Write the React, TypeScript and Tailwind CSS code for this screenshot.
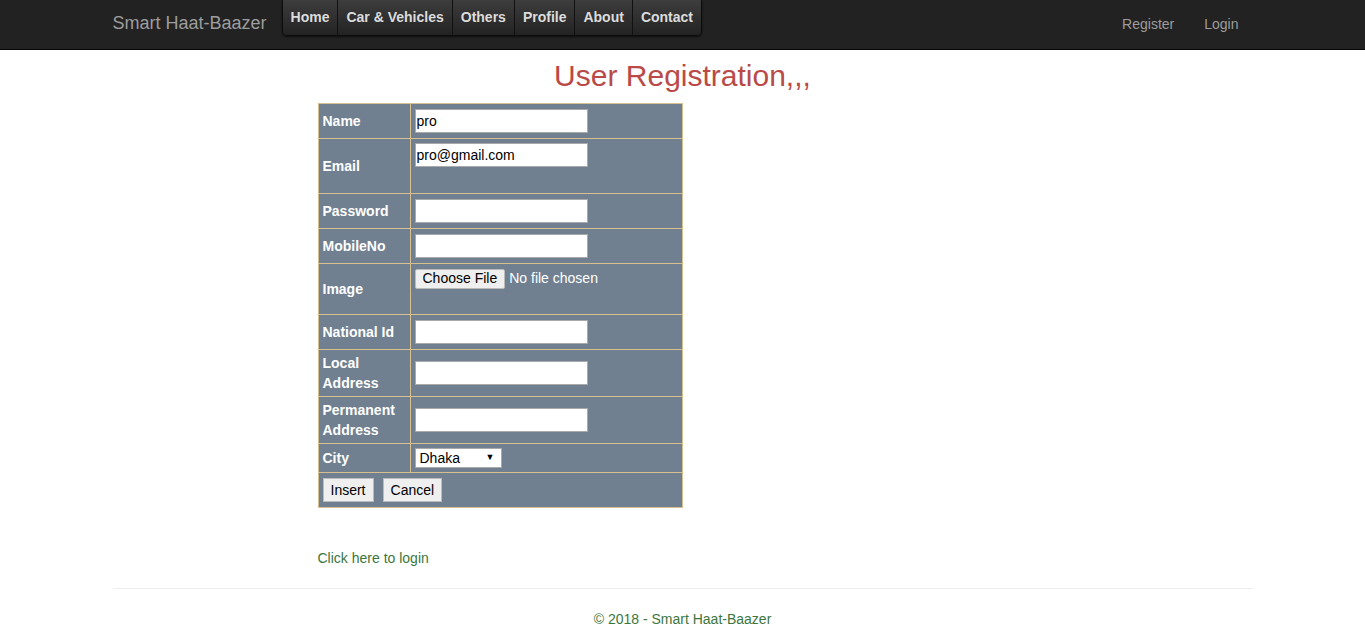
import React from "react";

const menu = ["Home", "Car & Vehicles", "Others", "Profile", "About", "Contact"];

function TextBox({ value = "" }: { value?: string }) {
  return (
    <input
      defaultValue={value}
      className="box-border h-[24px] w-[173px] border border-[#a9a9a9] bg-white px-[1px] text-[14px] text-black outline-none"
    />
  );
}

function Label({ children }: { children: React.ReactNode }) {
  return (
    <td className="w-[92px] border border-[#d8bf8f] px-[4px] align-middle text-[14px] font-bold leading-[20px] text-white">
      {children}
    </td>
  );
}

export default function App() {
  return (
    <div className="min-h-screen bg-white font-['Liberation_Sans',Arial,sans-serif] text-[14px] text-[#333]">
      {/* Navbar */}
      <header className="h-[50px] border-b border-[#080808] bg-[#222]">
        <div className="mx-auto flex h-full w-[1170px] items-start px-[15px]">
          <a className="mt-[13px] text-[18px] leading-[20px] text-[#9d9d9d]">Smart Haat-Baazer</a>
          <nav className="ml-[15px] flex h-[36px] overflow-hidden rounded-b-[5px] border border-t-0 border-[#0c0c0c] shadow-[0_1px_2px_rgba(0,0,0,0.6)]">
            {menu.map((m, i) => (
              <span
                key={m}
                className={
                  "flex h-full items-center bg-gradient-to-b from-[#3d3d3d] to-[#232323] px-[8px] text-[14px] font-bold text-[#dcdcdc] " +
                  (i < menu.length - 1 ? "border-r border-[#111]" : "")
                }
              >
                {m}
              </span>
            ))}
          </nav>
          <div className="ml-auto flex h-full items-center text-[14px] text-[#9d9d9d]">
            <a className="px-[15px]">Register</a>
            <a className="pl-[15px] pr-[14px]">Login</a>
          </div>
        </div>
      </header>

      <main className="mx-auto w-[1170px] px-[15px]">
        <h2 className="mt-[9px] mb-[11px] text-center text-[30px] leading-[33px] text-[#b94a48]">
          User Registration,,,
        </h2>

        <div className="pl-[205px]">
          <table className="w-[365px] border-collapse border border-[#d8bf8f] bg-[#708090]">
            <tbody>
              <tr className="h-[35px]">
                <Label>Name</Label>
                <td className="border border-[#d8bf8f] px-[4px] align-middle"><TextBox value="pro" /></td>
              </tr>
              <tr className="h-[55px]">
                <Label>Email</Label>
                <td className="border border-[#d8bf8f] px-[4px] pt-[4px] align-top"><TextBox value="pro@gmail.com" /></td>
              </tr>
              <tr className="h-[35px]">
                <Label>Password</Label>
                <td className="border border-[#d8bf8f] px-[4px] align-middle"><TextBox /></td>
              </tr>
              <tr className="h-[35px]">
                <Label>MobileNo</Label>
                <td className="border border-[#d8bf8f] px-[4px] align-middle"><TextBox /></td>
              </tr>
              <tr className="h-[51px]">
                <Label>Image</Label>
                <td className="border border-[#d8bf8f] px-[4px] pt-[4px] align-top">
                  <div className="flex items-center gap-[4px] text-[14px] text-white">
                    <span className="flex h-[20px] items-center rounded-[2px] border border-[#bbb] bg-[#efefef] px-[7px] text-black">Choose File</span>
                    <span>No file chosen</span>
                  </div>
                </td>
              </tr>
              <tr className="h-[35px]">
                <Label>National Id</Label>
                <td className="border border-[#d8bf8f] px-[4px] align-middle"><TextBox /></td>
              </tr>
              <tr className="h-[47px]">
                <Label>Local Address</Label>
                <td className="border border-[#d8bf8f] px-[4px] align-middle"><TextBox /></td>
              </tr>
              <tr className="h-[47px]">
                <Label>Permanent Address</Label>
                <td className="border border-[#d8bf8f] px-[4px] align-middle"><TextBox /></td>
              </tr>
              <tr className="h-[29px]">
                <Label>City</Label>
                <td className="border border-[#d8bf8f] px-[4px] align-middle">
                  <div className="flex h-[20px] w-[87px] items-center justify-between border border-[#a9a9a9] bg-white pl-[4px] pr-[6px] text-[14px] text-black">
                    <span>Dhaka</span>
                    <span className="text-[9px]">▼</span>
                  </div>
                </td>
              </tr>
              <tr className="h-[35px]">
                <td colSpan={2} className="border border-[#d8bf8f] px-[4px] align-middle">
                  <div className="flex gap-[9px]">
                    <span className="flex h-[24px] items-center border border-[#bbb] bg-[#efefef] px-[7px] text-[14px] text-black">Insert</span>
                    <span className="flex h-[24px] items-center border border-[#bbb] bg-[#efefef] px-[7px] text-[14px] text-black">Cancel</span>
                  </div>
                </td>
              </tr>
            </tbody>
          </table>

          <p className="mt-[40px] leading-[20px] text-[#3c763d]">Click here to login</p>
        </div>

        <hr className="mt-[20px] border-t border-[#eee]" />
        <footer className="mt-[20px] text-center leading-[20px] text-[#3c763d]">© 2018 - Smart Haat-Baazer</footer>
      </main>
    </div>
  );
}
